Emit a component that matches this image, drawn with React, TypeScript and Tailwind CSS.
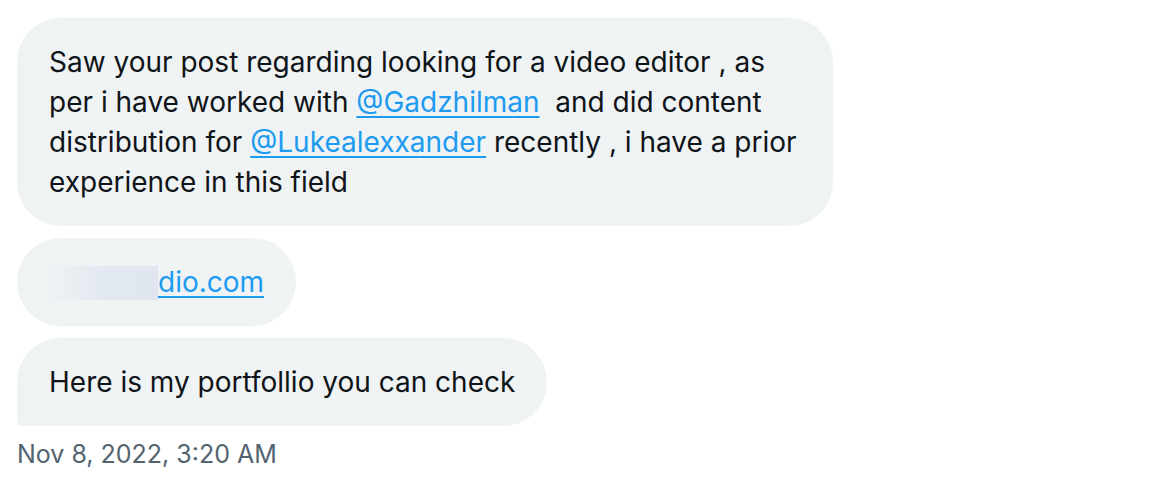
import React from "react";

const font = { fontFamily: "Inter, 'Noto Sans', sans-serif" };

function Link({ children }: { children: React.ReactNode }) {
  return <span className="text-[#1d9bf0] underline decoration-[2px] underline-offset-[4px]">{children}</span>;
}

export default function App() {
  return (
    <div className="w-[1174px] h-[502px] bg-white pl-[17px] pt-[18px]" style={font}>
      <div className="flex flex-col items-start gap-[12px]">
        <div className="w-[816px] bg-[#eff3f4] rounded-[44px] px-[32px] py-[24px] text-[28px] leading-[40px] text-[#0f1419] whitespace-nowrap">
          <div>Saw your post regarding looking for a video editor , as</div>
          <div>
            per i have worked with <Link>@Gadzhilman</Link>&nbsp; and did content
          </div>
          <div>
            distribution for <Link>@Lukealexxander</Link> recently , i have a prior
          </div>
          <div>experience in this field</div>
        </div>
        <div className="bg-[#eff3f4] rounded-full pl-[28px] pr-[32px] py-[24px] text-[28px] leading-[40px] flex items-center">
          <span className="w-[113px] h-[34px] mt-[2px] bg-gradient-to-r from-[#eff3f4] via-[#e3e9f1] to-[#dfe6ef]" />
          <Link>dio.com</Link>
        </div>
        <div className="bg-[#eff3f4] rounded-[44px] rounded-bl-[4px] px-[32px] py-[24px] text-[28px] leading-[40px] text-[#0f1419] whitespace-nowrap">
          Here is my portfollio you can check
        </div>
      </div>
      <div className="mt-[12px] text-[25px] leading-[32px] text-[#536471]">Nov 8, 2022, 3:20 AM</div>
    </div>
  );
}
